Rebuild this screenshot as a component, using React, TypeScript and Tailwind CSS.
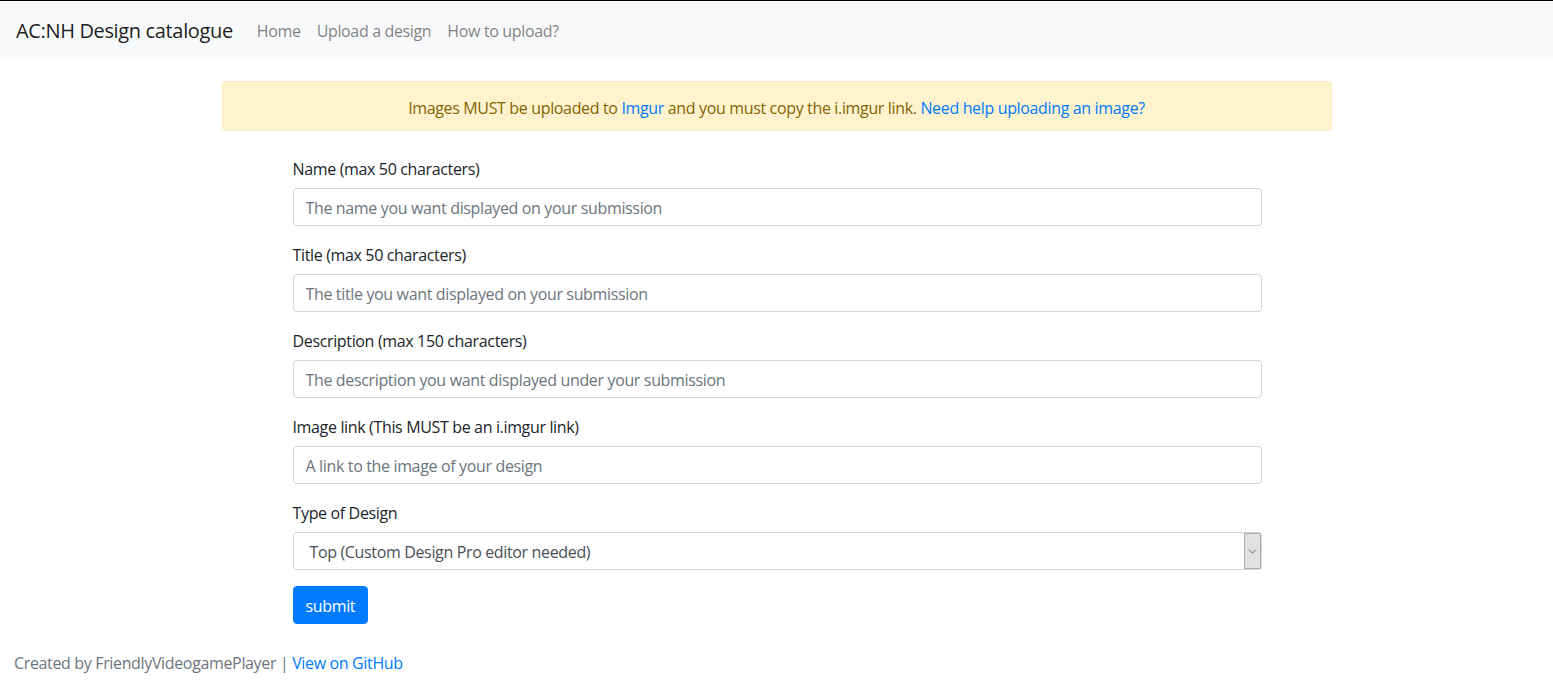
import { ChevronDown } from 'lucide-react';

const font = { fontFamily: '"Open Sans", "Noto Sans", sans-serif' };

function Field({ label, placeholder }: { label: string; placeholder: string }) {
    return (
        <div className="mb-4">
            <label className="block pt-px mb-[7px] text-[16px] leading-6 text-[#212529]">{label}</label>
            <input
                className="block w-full h-[38px] px-3 pt-[7px] pb-[5px] text-[16px] leading-6 text-[#495057] bg-white border border-[#ced4da] rounded placeholder:text-[#6c757d] outline-none tracking-[-0.35px]"
                placeholder={placeholder}
            />
        </div>
    );
}

export default function App() {
    return (
        <div className="min-h-[684px] bg-white border-t border-black text-[16px] leading-6 text-[#212529] tracking-[-0.35px]" style={font}>
            {/* Navbar */}
            <nav className="flex items-center h-14 px-4 pt-1 bg-[#f8f9fa]">
                <span className="mr-4 text-[20px] leading-[30px] text-black/90">AC:NH Design catalogue</span>
                <a className="px-2 text-black/50">Home</a>
                <a className="px-2 text-black/50">Upload a design</a>
                <a className="px-2 text-black/50">How to upload?</a>
            </nav>

            <div className="w-[1110px] mx-auto mt-6">
                <div className="px-5 pt-[14px] pb-[10px] text-center bg-[#fff3cd] border border-[#ffeeba] rounded text-[#856404]">
                    Images MUST be uploaded to <a className="text-[#007bff]">Imgur</a> and you must copy the i.imgur link.{' '}
                    <a className="text-[#007bff]">Need help uploading an image?</a>
                </div>

                <form className="w-[969px] ml-[71px] mt-[25px]">
                    <Field label="Name (max 50 characters)" placeholder="The name you want displayed on your submission" />
                    <Field label="Title (max 50 characters)" placeholder="The title you want displayed on your submission" />
                    <Field label="Description (max 150 characters)" placeholder="The description you want displayed under your submission" />
                    <Field label="Image link (This MUST be an i.imgur link)" placeholder="A link to the image of your design" />

                    <div className="mb-4">
                        <label className="block pt-px mb-[7px]">Type of Design</label>
                        <div className="flex items-stretch h-[38px] bg-white border border-[#ced4da] rounded">
                            <span className="flex-1 pl-4 pt-px leading-[36px] text-[#495057]">Top (Custom Design Pro editor needed)</span>
                            <span className="flex items-center justify-center w-[17px] bg-[#e1e1e1] border border-[#adadad]">
                                <ChevronDown size={13} strokeWidth={1.5} className="text-[#444]" />
                            </span>
                        </div>
                    </div>

                    <button type="button" className="h-[38px] px-3 pt-px text-white bg-[#007bff] border border-[#007bff] rounded">
                        submit
                    </button>
                </form>
            </div>

            <footer className="px-[14px] mt-[27px] text-[#6c757d]">
                Created by FriendlyVideogamePlayer | <a className="text-[#007bff]">View on GitHub</a>
            </footer>
        </div>
    );
}
